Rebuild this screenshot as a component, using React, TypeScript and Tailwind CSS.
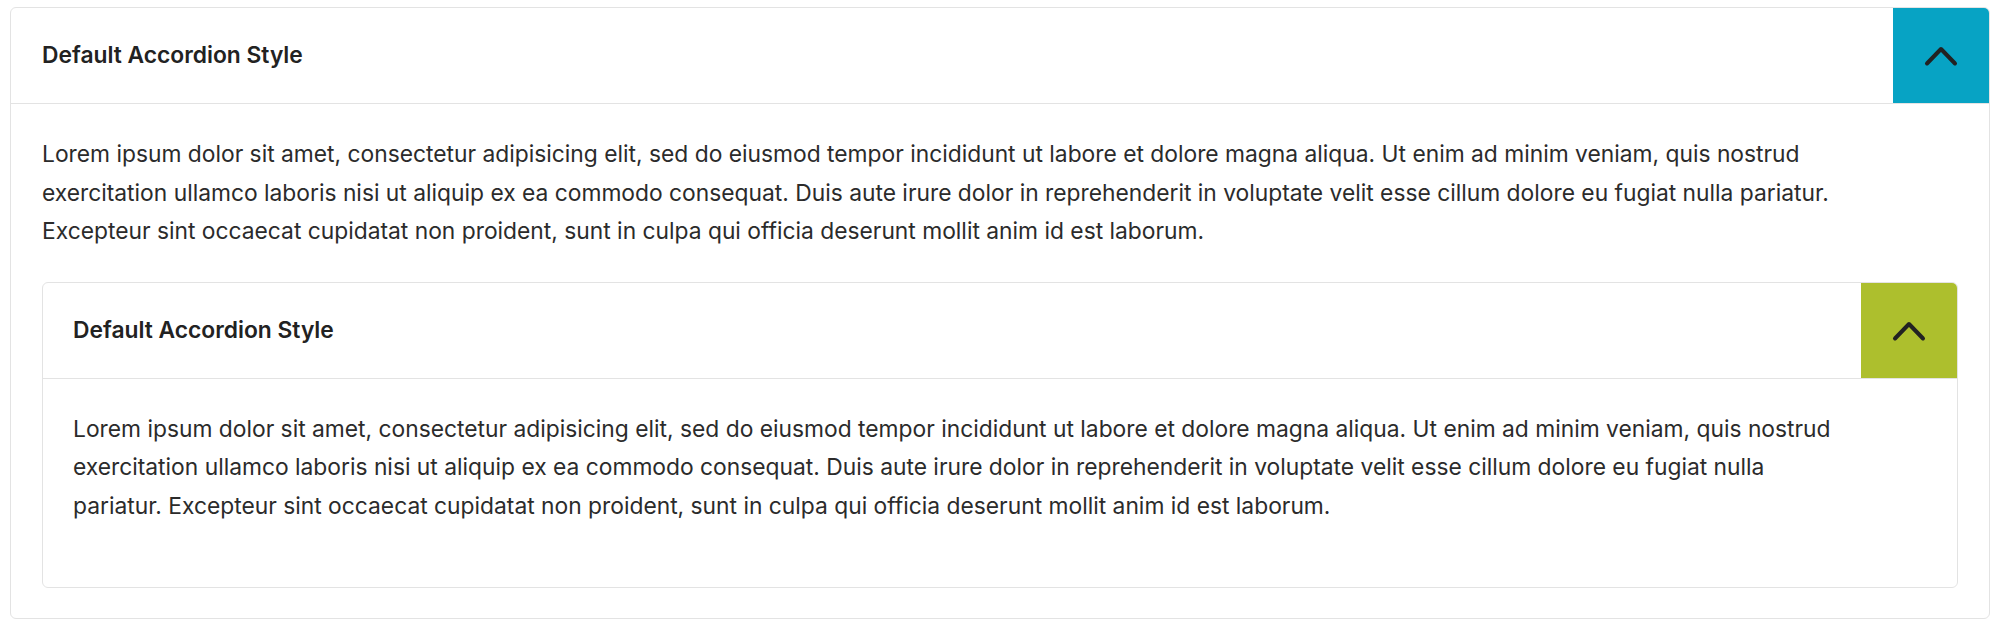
const outerLines = [
  "Lorem ipsum dolor sit amet, consectetur adipisicing elit, sed do eiusmod tempor incididunt ut labore et dolore magna aliqua. Ut enim ad minim veniam, quis nostrud",
  "exercitation ullamco laboris nisi ut aliquip ex ea commodo consequat. Duis aute irure dolor in reprehenderit in voluptate velit esse cillum dolore eu fugiat nulla pariatur.",
  "Excepteur sint occaecat cupidatat non proident, sunt in culpa qui officia deserunt mollit anim id est laborum.",
];

const innerLines = [
  "Lorem ipsum dolor sit amet, consectetur adipisicing elit, sed do eiusmod tempor incididunt ut labore et dolore magna aliqua. Ut enim ad minim veniam, quis nostrud",
  "exercitation ullamco laboris nisi ut aliquip ex ea commodo consequat. Duis aute irure dolor in reprehenderit in voluptate velit esse cillum dolore eu fugiat nulla",
  "pariatur. Excepteur sint occaecat cupidatat non proident, sunt in culpa qui officia deserunt mollit anim id est laborum.",
];

function Chevron() {
  return (
    <svg width="34" height="23" viewBox="0 0 34 23" fill="none">
      <path
        d="M3 19.5 L17 5 L31 19.5"
        stroke="#222222"
        strokeWidth="4"
        strokeLinecap="round"
        strokeLinejoin="round"
      />
    </svg>
  );
}

function Paragraph({ lines, className }: { lines: string[]; className: string }) {
  return (
    <p className={`text-[22.8px] leading-[38.6px] text-[#2b2b2b] ${className}`}>
      {lines.map((l) => (
        <span key={l} className="block whitespace-nowrap">
          {l}
        </span>
      ))}
    </p>
  );
}

export default function App() {
  return (
    <div className="min-h-[627px] bg-white pt-[7px] pl-[10px] font-['Inter',sans-serif]">
      <div className="w-[1980px] overflow-hidden rounded-[6px] border border-[#e3e3e3] bg-white">
        {/* outer header */}
        <div className="flex h-[96px] items-center border-b border-[#e3e3e3]">
          <h3 className="flex-1 pl-[31px] text-[22.8px] font-semibold text-[#222]">Default Accordion Style</h3>
          <button className="flex h-full w-[96px] items-center justify-center bg-[#07a3c4]">
            <Chevron />
          </button>
        </div>

        <div className="px-[31px] pt-[31px] pb-[30px]">
          <Paragraph lines={outerLines} className="mb-[31px]" />

          {/* nested accordion */}
          <div className="overflow-hidden rounded-[6px] border border-[#e3e3e3]">
            <div className="flex h-[96px] items-center border-b border-[#e3e3e3]">
              <h3 className="flex-1 pl-[30px] text-[22.8px] font-semibold text-[#222]">Default Accordion Style</h3>
              <button className="flex h-full w-[96px] items-center justify-center bg-[#adbf2d]">
                <Chevron />
              </button>
            </div>
            <div className="px-[30px] pt-[31px] pb-[61px]">
              <Paragraph lines={innerLines} className="" />
            </div>
          </div>
        </div>
      </div>
    </div>
  );
}
